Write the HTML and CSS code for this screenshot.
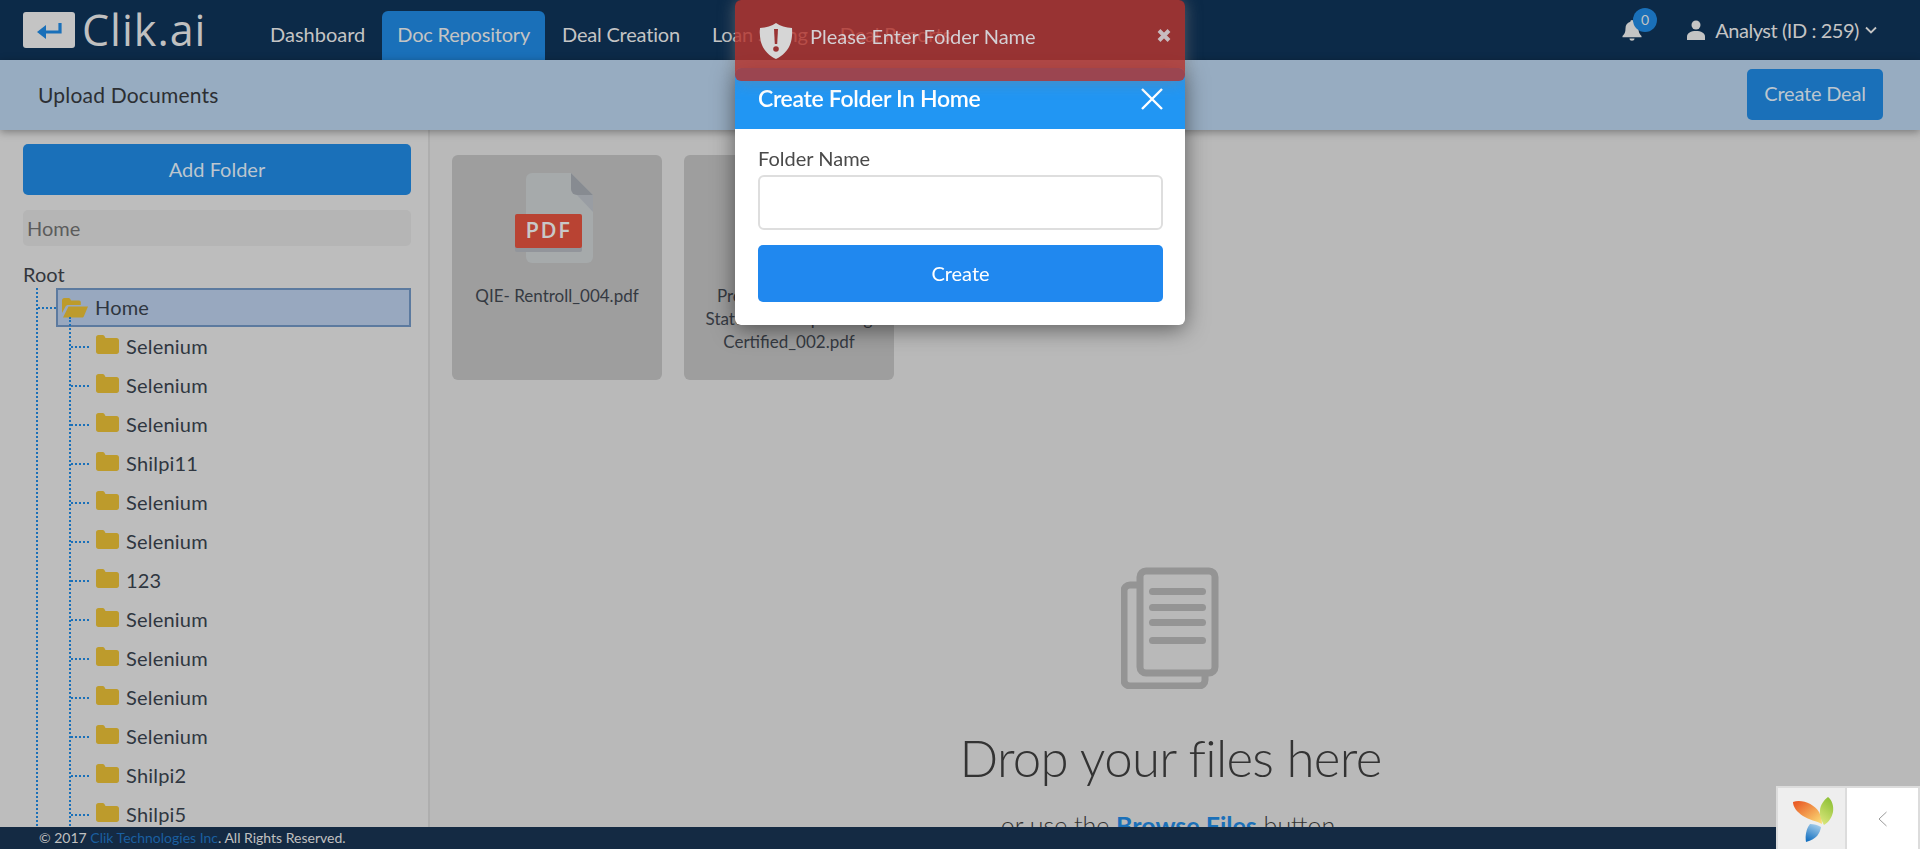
FILE: index.html
```html
<!DOCTYPE html>
<html lang="en">
  <head>
    <meta charset="UTF-8" />
    <title>Clik.ai - Upload Documents</title>
    <link rel="stylesheet" href="styles.css">
  </head>
  <body>
    <div class="app">
      <header class="topbar">
        <div class="logo">
          <span class="logo-key">
            <svg width="25" height="17" viewBox="0 0 25 17"><path d="M23 1v9H8" fill="none" stroke="#1a70b9" stroke-width="3.200"/><path d="M0 10l9-7v14z" fill="#1a70b9"/></svg>
          </span>
          <span class="logo-text">Clik.ai</span>
        </div>
        <nav class="mainnav">
          <a class="nav-link first">Dashboard</a>
          <a class="nav-link active">Doc Repository</a>
          <a class="nav-link">Deal Creation</a>
          <a class="nav-link">Loan Sizing</a>
          <a class="nav-link">Deal Reports</a>
        </nav>
        <div class="user-area">
          <span class="bell">
            <svg width="20" height="22" viewBox="0 0 20 22"><path d="M10 1c1 0 1.600.8 1.600 1.700C15 3.500 16.500 6 16.500 9.500c0 4 1 5.500 3 7.500v1.200H.5V17c2-2 3-3.500 3-7.500C3.500 6 5 3.500 8.400 2.700 8.400 1.800 9 1 10 1zM7.500 19.500h5c0 1.300-1.100 2.300-2.500 2.300s-2.500-1-2.500-2.300z" fill="#c4c4c4"/></svg>
            <span class="badge">0</span>
          </span>
          <svg class="user-icon" width="18" height="20" viewBox="0 0 18 20"><circle cx="9" cy="5" r="4.500" fill="#c4c4c4"/><path d="M0 20v-3.500C0 13 4 11 9 11s9 2 9 5.500V20z" fill="#c4c4c4"/></svg>
          <span class="user-name">Analyst (ID : 259)</span>
          <svg width="12" height="8" viewBox="0 0 12 8"><path d="M1 1.500l5 5 5-5" fill="none" stroke="#c4c4c4" stroke-width="1.800"/></svg>
        </div>
      </header>

      <div class="subbar">
        <h1 class="page-title">Upload Documents</h1>
        <button class="btn-deal">Create Deal</button>
      </div>

      <div class="content">
        <aside class="sidebar">
          <button class="btn-folder">Add Folder</button>
          <div class="crumb">Home</div>
          <div class="tree-root">Root</div>
          <ul class="tree">
            <li>
              <div class="tree-home">
                <span class="dash"></span>
                <div class="home-row">
                  <svg width="26" height="20" viewBox="0 0 26 20"><path d="M0 2.500C0 1 1 0 2.200 0h4.300c1 0 1.500.5 2 1.500l.5 1h8c1 0 1.800.8 1.800 1.800V7H6.500C5 7 4 7.600 3.300 9L0 15z" fill="#bd9b2c"/><path d="M6.500 8.500H26l-4 9.500c-.4 1-1 1.500-2.200 1.500H1z" fill="#bd9b2c"/></svg>
                  <span class="tree-label">Home</span>
                </div>
              </div>
              <ul class="tree-children" id="folderList"></ul>
            </li>
          </ul>
        </aside>

        <main class="files">
          <div class="cards">
            <div class="card">
              <svg class="pdf-icon" width="78" height="90" viewBox="0 0 78 90">
                <path d="M11 6a6 6 0 0 1 6-6h39l22 22v62a6 6 0 0 1-6 6H17a6 6 0 0 1-6-6z" fill="#a6aaab"/>
                <path d="M56 0l22 22h-16a6 6 0 0 1-6-6z" fill="#878b91"/>
                <path d="M62 22h16v17z" fill="#999da3"/>
                <rect x="0" y="44" width="67" height="35" rx="2" fill="#92959b"/>
                <rect x="0" y="41" width="67" height="34" rx="2" fill="#b94333"/>
                <text x="33.500" y="65" class="pdf-text">PDF</text>
              </svg>
              <p class="file-name">QIE- Rentroll_004.pdf</p>
            </div>
            <div class="card">
              <p class="file-name second">Property Operating<br>Statement - Operating<br>Certified_002.pdf</p>
            </div>
          </div>
          <div class="dropzone">
            <svg width="100" height="122" viewBox="0 0 100 122" class="drop-icon">
              <path d="M18 18H9a6 6 0 0 0-6 6v89a6 6 0 0 0 6 6h69a6 6 0 0 0 6-6v-8" fill="none" stroke="#949494" stroke-width="7"/>
              <rect x="19" y="4" width="75" height="102" rx="6" fill="none" stroke="#949494" stroke-width="7"/>
              <rect x="28" y="21" width="57" height="7" rx="3.500" fill="#949494"/>
              <rect x="28" y="37" width="57" height="7" rx="3.500" fill="#949494"/>
              <rect x="28" y="52" width="57" height="7" rx="3.500" fill="#949494"/>
              <rect x="28" y="70" width="57" height="7" rx="3.500" fill="#949494"/>
            </svg>
            <h2 class="drop-title">Drop your files here</h2>
            <p class="drop-sub">or use the <b>Browse Files</b> button</p>
          </div>
        </main>
      </div>

      <footer class="footer">&copy; 2017 <a>Clik Technologies Inc</a>. All Rights Reserved.</footer>
    </div>

    <!-- debug toolbar -->
    <div class="yii-bar">
      <div class="yii-logo">
        <svg width="44" height="46" viewBox="0 0 44 46">
          <defs>
            <linearGradient id="petalRed" x1="0" y1="0" x2="1" y2="1"><stop offset="0" stop-color="#e8501f"/><stop offset="1" stop-color="#fbe27a"/></linearGradient>
            <linearGradient id="petalGreen" x1="0.700" y1="0" x2="0.300" y2="1"><stop offset="0" stop-color="#8cbf35"/><stop offset="1" stop-color="#d9e67a"/></linearGradient>
            <linearGradient id="petalBlue" x1="0.700" y1="0" x2="0.300" y2="1"><stop offset="0" stop-color="#a5cdea"/><stop offset="1" stop-color="#1470c0"/></linearGradient>
          </defs>
          <path d="M1 5C10 2 22 7 27 15c2 4 3 8 3 12-5-3-13-4-19-8C5 15 1 10 1 5z" fill="url(#petalRed)"/>
          <path d="M36 0c4 3 6 9 5 15-1 5-4 10-9 13-2-4-5-9-4-14 0-6 4-11 8-14z" fill="url(#petalGreen)"/>
          <path d="M18 27c4 0 8 1 11 3-1 6-4 12-15 15-1-6 0-13 4-18z" fill="url(#petalBlue)"/>
        </svg>
      </div>
      <div class="yii-toggle">
        <svg width="10" height="16" viewBox="0 0 10 16"><path d="M8.500 1L1 8l7.500 7" fill="none" stroke="#9a9a9a" stroke-width="1"/></svg>
      </div>
    </div>

    <!-- create folder modal -->
    <div class="modal">
      <div class="modal-head">
        <span class="modal-title">Create Folder In Home</span>
        <svg width="22" height="22" viewBox="0 0 22 22"><path d="M1 1l20 20M21 1L1 21" stroke="#fff" stroke-width="2.400"/></svg>
      </div>
      <div class="modal-body">
        <label class="field-label">Folder Name</label>
        <input class="field-input" type="text" />
        <button class="btn-create">Create</button>
      </div>
    </div>

    <div class="alert">
      <svg class="alert-icon" width="34" height="36" viewBox="0 0 34 36">
        <path d="M17 0c4 3 10 4.500 16 5 1 13-2 24-16 31C3 29 0 18 1 5c6-.5 12-2 16-5z" fill="#d6d6d6"/>
        <path d="M15 6h4l-.8 15h-2.400z" fill="#9a3434"/>
        <circle cx="17" cy="26" r="2.800" fill="#9a3434"/>
      </svg>
      <span class="alert-text">Please Enter Folder Name</span>
      <svg class="alert-close" width="14" height="15" viewBox="0 0 14 15"><path d="M2 2.500l10 10M12 2.500l-10 10" stroke="#c8bcc0" stroke-width="4"/></svg>
    </div>

    <script>
      // folder rows in the tree
      const folders = ["Selenium", "Selenium", "Selenium", "Shilpi11", "Selenium", "Selenium", "123", "Selenium", "Selenium", "Selenium", "Selenium", "Shilpi2", "Shilpi5"];
      const folderList = document.getElementById("folderList");
      folders.forEach((name) => {
        const li = document.createElement("li");
        li.className = "folder-row";
        li.innerHTML = '<span class="dash"></span>' +
          '<svg width="23" height="20" viewBox="0 0 23 20"><path d="M0 2.500C0 1 1 0 2.500 0h4c1 0 1.700.5 2.200 1.500L9.500 3h11C22 3 23 4 23 5.500v11c0 1.500-1 2.500-2.500 2.500h-18C1 19 0 18 0 16.500z" fill="#bd9b2c"/></svg>';
        const label = document.createElement("span");
        label.className = "tree-label";
        label.textContent = name;
        li.appendChild(label);
        folderList.appendChild(li);
      });
    </script>
  </body>
</html>
```

FILE: styles.css
```css
* {
  box-sizing: border-box;
}

html, body {
  margin: 0;
  height: 100%;
  overflow: hidden;
}

body {
  font-family: "Lato", "Open Sans", sans-serif;
  font-size: 20px;
  color: #333;
  background-color: #b9b9b9;
}

.app {
  height: 100vh;
  display: flex;
  flex-direction: column;
}

/* top navigation */
.topbar {
  height: 60px;
  flex: none;
  display: flex;
  background-color: #0c2a48;
  color: #c4c4c4;
}

.logo {
  width: 255px;
  padding: 12px 0 0 23px;
  display: flex;
  align-items: flex-start;
}

.logo-key {
  width: 52px;
  height: 36px;
  border-radius: 3px;
  background-color: #c4c4c4;
  display: flex;
  align-items: center;
  justify-content: center;
}

.logo-text {
  margin-left: 7px;
  font-family: "Open Sans", sans-serif;
  font-size: 43px;
  line-height: 36px;
  letter-spacing: 1px;
  color: #c0c0c0;
}

.mainnav {
  display: flex;
  gap: 2px;
  align-items: flex-end;
}

.nav-link {
  height: 49px;
  padding: 0 15px;
  line-height: 46px;
  letter-spacing: -0.2px;
  border-radius: 6px 6px 0 0;
}

.nav-link.first {
  letter-spacing: 0;
}

.nav-link.active {
  background-color: #1a70b9;
}

.user-area {
  margin-left: auto;
  padding: 0 43px 0 0;
  display: flex;
  align-items: center;
}

.bell {
  position: relative;
  margin-right: 45px;
  display: flex;
}

.badge {
  position: absolute;
  top: -11px;
  left: 11px;
  width: 24px;
  height: 24px;
  border-radius: 50%;
  background-color: #1a70b9;
  font-size: 14px;
  line-height: 24px;
  text-align: center;
}

.user-name {
  margin: 0 6px 0 10px;
  letter-spacing: -0.45px;
}

/* page title bar */
.subbar {
  height: 70px;
  flex: none;
  padding: 0 37px 2px 38px;
  display: flex;
  align-items: center;
  justify-content: space-between;
  background-color: #97acc1;
  box-shadow: 0 2px 8px rgba(0, 0, 0, 0.35);
  position: relative;
}

.page-title {
  margin: 0;
  font-size: 21px;
  font-weight: 400;
  letter-spacing: 0.2px;
  color: #2c2f33;
}

.btn-deal {
  width: 136px;
  height: 51px;
  padding-bottom: 3px;
  border: none;
  border-radius: 5px;
  background-color: #1a70b9;
  color: #bcc6cf;
  font: inherit;
  letter-spacing: -0.2px;
}

.content {
  flex: 1;
  min-height: 0;
  display: flex;
  overflow: hidden;
}

/* folder tree */
.sidebar {
  width: 430px;
  flex: none;
  padding: 14px 17px 0 23px;
  background-color: #bdbdbd;
  border-right: 2px solid #aeaeae;
}

.btn-folder {
  width: 100%;
  height: 51px;
  padding-bottom: 3px;
  border: none;
  border-radius: 5px;
  background-color: #1a70b9;
  color: #bcc6cf;
  font: inherit;
}

.crumb {
  height: 36px;
  margin-top: 15px;
  padding-left: 4px;
  line-height: 36px;
  border-radius: 5px;
  background-color: #b5b5b5;
  color: #5c5c5c;
}

.tree-root {
  height: 42px;
  padding-top: 14px;
  line-height: 28px;
  color: #33373d;
}

.tree, .tree-children {
  margin: 0;
  padding: 0;
  list-style: none;
}

.tree {
  margin-left: 13px;
  border-left: 2px dotted #1a70b9;
}

.dash {
  width: 18px;
  flex: none;
  border-top: 2px dotted #1a70b9;
}

.tree-home {
  display: flex;
  align-items: center;
}

.home-row {
  flex: 1;
  height: 39px;
  padding-left: 4px;
  display: flex;
  align-items: center;
  gap: 7px;
  border: 2px solid #5c7a9f;
  background-color: #98a8bf;
}

.tree-children {
  position: relative;
  margin: -10px 0 0 31px;
  padding-top: 10px;
  border-left: 2px dotted #1a70b9;
}

.folder-row {
  height: 39px;
  display: flex;
  align-items: center;
}

.folder-row svg {
  margin-left: 7px;
  margin-top: -3px;
}

.tree-label {
  margin-top: -2px;
  letter-spacing: 0.2px;
  color: #2f3640;
}

.folder-row .tree-label {
  margin-left: 7px;
}

/* file cards */
.files {
  flex: 1;
  min-width: 0;
  padding: 25px 0 0 22px;
}

.cards {
  display: flex;
  gap: 22px;
}

.card {
  width: 210px;
  height: 225px;
  padding-top: 18px;
  border-radius: 6px;
  background-color: #9e9e9e;
  text-align: center;
}

.pdf-icon {
  display: block;
  margin-left: 63px;
}

.pdf-text {
  font-family: "Open Sans", sans-serif;
  font-size: 22px;
  font-weight: 600;
  letter-spacing: 1.5px;
  fill: #c8c8c8;
  text-anchor: middle;
}

.file-name {
  margin: 21px 0 0;
  font-size: 17px;
  line-height: 23px;
  color: #353a42;
}

.file-name.second {
  margin-top: 111px;
}

.dropzone {
  margin: 187px 9px 0 -22px;
  text-align: center;
}

.drop-icon {
  display: block;
  margin: 0 auto;
}

.drop-title {
  margin: 37px 0 0;
  font-size: 51px;
  font-weight: 300;
  line-height: 64px;
  letter-spacing: -0.7px;
  color: #333;
}

.drop-sub {
  margin: 20px 0 0;
  padding-right: 5px;
  font-size: 25px;
  font-weight: 300;
  color: #333;
}

.drop-sub b {
  font-weight: 700;
  color: #1a70b9;
}

.footer {
  height: 22px;
  flex: none;
  padding-left: 39px;
  font-size: 14px;
  line-height: 22px;
  background-color: #142a43;
  color: #c0c0c0;
  position: relative;
}

.footer a {
  color: #1a5fa0;
}

/* debug toolbar */
.yii-bar {
  position: fixed;
  right: 0;
  bottom: 0;
  width: 144px;
  height: 63px;
  display: flex;
  border: 2px solid #dcdcdc;
  border-bottom: none;
  background-color: #fff;
}

.yii-logo {
  width: 69px;
  padding: 9px 0 0 14px;
  background-color: #eee;
  border-right: 2px solid #dcdcdc;
}

.yii-toggle {
  flex: 1;
  display: flex;
  align-items: center;
  justify-content: center;
}

/* modal */
.modal {
  position: fixed;
  top: 68px;
  left: 735px;
  width: 450px;
  height: 257px;
  border-radius: 6px;
  background-color: #fff;
  box-shadow: 0 4px 22px rgba(0, 0, 0, 0.5);
}

.modal-head {
  height: 61px;
  padding: 0 22px 0 23px;
  display: flex;
  align-items: center;
  justify-content: space-between;
  border-radius: 6px 6px 0 0;
  background-color: #2196f3;
  color: #fff;
}

.modal-title {
  margin-top: -2px;
  font-size: 23px;
  font-weight: 600;
  letter-spacing: -0.35px;
}

.modal-body {
  padding: 16px 22px 0 23px;
}

.field-label {
  display: block;
  line-height: 26px;
  color: #4a4a4a;
}

.field-input {
  display: block;
  width: 100%;
  height: 55px;
  margin-top: 4px;
  border: 2px solid #dedede;
  border-radius: 6px;
}

.btn-create {
  width: 100%;
  height: 57px;
  margin-top: 15px;
  padding-bottom: 3px;
  border: none;
  border-radius: 5px;
  background-color: #2088ef;
  color: #fff;
  font: inherit;
}

/* alert */
.alert {
  position: fixed;
  top: 0;
  left: 735px;
  width: 450px;
  height: 81px;
  padding: 0 14px 0 24px;
  display: flex;
  align-items: center;
  border-radius: 6px;
  background-color: rgba(181, 53, 47, 0.83);
  box-shadow: 0 0 16px rgba(130, 130, 130, 0.6);
  color: #d4d0d4;
}

.alert-icon {
  flex: none;
}

.alert-text {
  flex: 1;
  margin: -10px 0 0 17px;
}

.alert-close {
  margin-top: -11px;
}
```
